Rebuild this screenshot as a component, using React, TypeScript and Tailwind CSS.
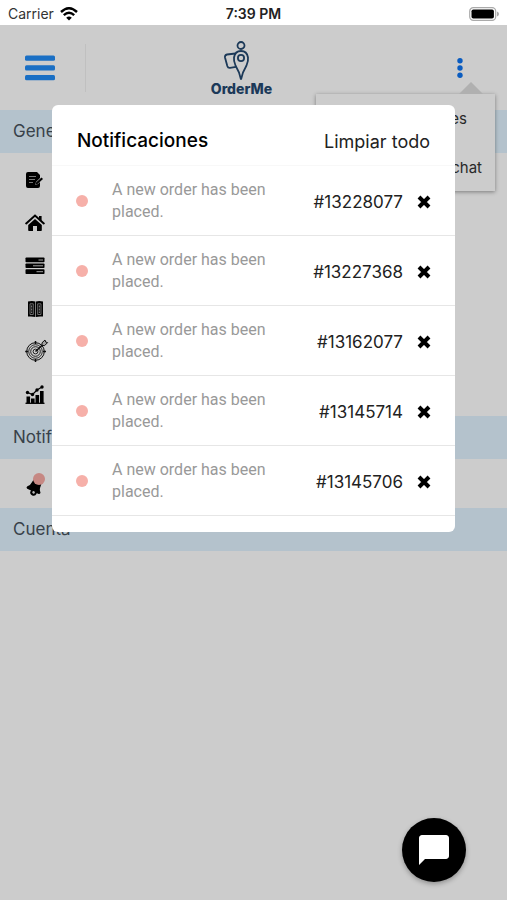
import type { ReactNode } from 'react'
import { MdChatBubble } from 'react-icons/md'

const notifications = [
  { id: '13228077', text: 'A new order has been placed.' },
  { id: '13227368', text: 'A new order has been placed.' },
  { id: '13162077', text: 'A new order has been placed.' },
  { id: '13145714', text: 'A new order has been placed.' },
  { id: '13145706', text: 'A new order has been placed.' },
]

function OrdersIcon() {
  return (
    <svg viewBox="0 0 20 20" className="w-5 h-5">
      <path d="M3 2h9l3 3v3l-4 4-1 3 3-1 2-2v4q0 2-2 2H3q-2 0-2-2V4q0-2 2-2z" />
      <path d="M4 6.5h7M4 9.5h6M4 12.5h4" stroke="#bbb" strokeWidth="0.8" fill="none" />
      <path d="M11 12.5l5.5-5 1.5 1.5-5.5 5-2.3.7z" />
    </svg>
  )
}

function HomeIcon() {
  return (
    <svg viewBox="0 0 20 20" className="w-5 h-5">
      <path d="M1.2 10.4L10 2.6l8.8 7.8" stroke="#000" strokeWidth="2" fill="none" strokeLinecap="round" />
      <path d="M14 3h2.6v5L14 5.6zM10 6l6.8 6v5.2q0 .8-.8.8h-4v-5H8v5H4q-.8 0-.8-.8V12z" />
    </svg>
  )
}

function StackIcon() {
  return (
    <svg viewBox="0 0 20 20" className="w-5 h-5">
      <rect x="0.5" y="1.5" width="19" height="4.8" rx="0.8" />
      <rect x="0.5" y="7.5" width="19" height="4.6" rx="0.8" />
      <rect x="0.5" y="13.3" width="19" height="4.8" rx="0.8" />
      <path d="M13.5 4H18M8 9.800h10M11.5 15.700H18" stroke="#ccc" strokeWidth="1" />
    </svg>
  )
}

function MenuBookIcon() {
  return (
    <svg viewBox="0 0 20 20" className="w-5 h-5">
      <path d="M3 2.500q4-.8 7.400 0v15.500q-3.400-1-7.400-.4zM18 2.500q-4-.8-7 0v15.500q3-1 7-.4z" />
      <path d="M5 4.800h3.300v10.700H5zM12.700 4.800H16v10.700h-3.300z" stroke="#bbb" strokeWidth="0.7" fill="none" />
      <path d="M6.650 6.500v7.500M14.350 6.500v7.500" stroke="#bbb" strokeWidth="0.9" strokeDasharray="2 1" />
    </svg>
  )
}

function TargetIcon() {
  return (
    <svg viewBox="0 0 24 26" className="w-6 h-[26px] mb-1.5" fill="none" stroke="#111" strokeWidth="1">
      <circle cx="10.500" cy="15.500" r="8.800" />
      <circle cx="10.500" cy="15.500" r="6.800" strokeWidth="0.800" />
      <circle cx="10.500" cy="15.500" r="4.800" strokeWidth="0.900" />
      <circle cx="10.500" cy="15.500" r="2.400" strokeWidth="0.900" />
      <path d="M10.500 5v3M10.500 23v3M.2 15.500h3M18 15.500h3" strokeWidth="1.500" />
      <path d="M10.500 15.500L19 7.500" strokeWidth="1.700" />
      <path d="M17 9.500V6.800L20 4l.6 2 2 .6-3 3z" fill="#ccc" />
    </svg>
  )
}

function ChartIcon() {
  return (
    <svg viewBox="0 0 20 20" className="w-5 h-5">
      <path d="M1.500 11.500h3.600v6.500H1.500zM6 13.500h3.600v4.500H6zM10.500 10h3.600v8h-3.600zM15 6h3.600v12H15z" />
      <path d="M0.500 18.300h19" stroke="#000" strokeWidth="1.300" />
      <path d="M2.500 7.500L7.500 9.500 12 5 17 2" stroke="#000" strokeWidth="1.200" fill="none" />
      <circle cx="2.500" cy="7.500" r="1.700" />
      <circle cx="7.500" cy="9.500" r="1.700" />
      <circle cx="12" cy="5" r="1.700" />
      <circle cx="17" cy="2" r="1.700" />
    </svg>
  )
}

function BellIcon() {
  return (
    <svg viewBox="0 0 20 20" className="w-5 h-5">
      <g transform="rotate(25 10 10)">
        <path d="M10 0q4.500 1 4.800 7 0 3.500 2.400 5.500 1 1.800-.9 2.300H3.700q-1.900-.5-.9-2.300Q5.200 10.500 5.200 7 5.500 1 10 0z" />
        <circle cx="11" cy="15.500" r="2.300" fill="#e8e8e8" stroke="#000" strokeWidth="2" />
      </g>
    </svg>
  )
}

function Logo() {
  return (
    <div className="flex flex-col items-center text-[#23486f]">
      <svg viewBox="0 0 36 40" className="w-9 h-10" fill="none" stroke="currentColor" strokeWidth="1.800">
        <circle cx="18" cy="4.500" r="3.500" />
        <path d="M18 38.500Q16.500 31 12.500 24.500 10.500 20 11 16.500 12 10 18 10t7 6.500q.5 3.500-1.500 8Q19.500 31 18 38.500z" />
        <circle cx="18" cy="17" r="3.100" />
        <path d="M12.500 12.500L4 13.500q-2.500.5-2 3l2.300 8.500q.7 2.200 2.700 1.900l6-1" />
      </svg>
      <span className="text-sm leading-4 font-extrabold">OrderMe</span>
    </div>
  )
}

function SectionTitle({ children }: { children: ReactNode }) {
  return <h2 className="h-[43px] px-[13px] flex items-center bg-[#e1f3ff] text-[17px] text-[#47525c]">{children}</h2>
}

const menu = [
  { label: 'Pedidos', icon: <OrdersIcon /> },
  { label: 'Inicio', icon: <HomeIcon /> },
  { label: 'Inventario', icon: <StackIcon /> },
  { label: 'Carta', icon: <MenuBookIcon /> },
  { label: 'Objetivos', icon: <TargetIcon /> },
  { label: 'Informes', icon: <ChartIcon /> },
]

export default function App() {
  return (
    <div className="min-h-screen flex flex-col bg-white font-[Inter,sans-serif] text-black">
      <div className="h-[25px] px-2 pt-0.5 grid grid-cols-3 items-center text-sm">
        <div className="flex items-center gap-1.5">
          <span className="text-[#333]">Carrier</span>
          <svg viewBox="0 0 18 14" className="w-[18px] h-3.5" fill="none" stroke="#000" strokeWidth="2.400">
            <path d="M1 5Q9-2.500 17 5M3.800 8.200q5.200-4.800 10.400 0" />
            <path d="M9 13.500L6.200 10.700q2.800-2.400 5.600 0z" fill="#000" stroke="none" />
          </svg>
        </div>
        <div className="text-center font-semibold text-[#222]">7:39 PM</div>
        <svg viewBox="0 0 30 14" className="w-[30px] h-3.5 justify-self-end">
          <rect x="0.700" y="0.700" width="26" height="12.600" rx="3.600" fill="#fff" stroke="#aaa" strokeWidth="1.200" />
          <rect x="2.500" y="2.500" width="22.400" height="9" rx="1.800" />
          <path d="M28 4.500q2 .8 2 2.500t-2 2.500z" fill="#aaa" />
        </svg>
      </div>

      <div className="relative flex-1">
        <header className="h-[85px] px-6 grid grid-cols-3 items-center">
          <div className="flex items-center gap-[29px]">
            <button aria-label="Menu" className="flex">
              <svg viewBox="0 0 32 26" className="w-8 h-[26px]" fill="#218bf5">
                <rect x="1" y="0.500" width="30" height="5.300" rx="1.500" />
                <rect x="1" y="10.200" width="30" height="5.300" rx="1.500" />
                <rect x="1" y="20" width="30" height="5.300" rx="1.500" />
              </svg>
            </button>
            <div className="w-px h-12 bg-[#f0f0f0]" />
          </div>
          <div className="flex justify-center pt-0.5 pr-6"><Logo /></div>
          <button aria-label="Más opciones" className="justify-self-end mr-5">
            <svg viewBox="0 0 6 20" className="w-1.5 h-5" fill="#0d73f0">
              <circle cx="3" cy="2.700" r="2.700" />
              <circle cx="3" cy="10" r="2.700" />
              <circle cx="3" cy="17.300" r="2.700" />
            </svg>
          </button>
        </header>

        <nav>
          <SectionTitle>General</SectionTitle>
          <ul className="pt-[5px]">
            {menu.map(m => (
              <li key={m.label}>
                <a href="#" aria-label={m.label} className="h-[43px] px-[25px] flex items-center">{m.icon}</a>
              </li>
            ))}
          </ul>
          <SectionTitle>Notificaciones</SectionTitle>
          <a href="#" aria-label="Notificaciones" className="h-[49px] px-[25px] pt-1.5 flex items-center">
            <span className="relative">
              <BellIcon />
              <span className="absolute -top-1 left-2 w-3 h-3 rounded-full bg-[#f8aaa4]" />
            </span>
          </a>
          <SectionTitle>Cuenta</SectionTitle>
        </nav>

        <div className="absolute top-[69px] right-3 w-[179px] h-[97px] bg-white shadow-[0_1px_4px_rgba(0,0,0,0.4)] text-[15px] text-[#333]">
          <svg viewBox="0 0 24 12" className="absolute -top-3 right-3 w-6 h-3" fill="#dcdcdc">
            <path d="M0 12L12 0l12 12z" />
          </svg>
          <button className="w-full h-[51px] pr-7 text-right">Notificaciones</button>
          <button className="w-full h-[46px] pr-[13px] text-right">Soporte chat</button>
        </div>

        <div className="absolute inset-0 bg-black/20" />

        <div role="dialog" aria-label="Notificaciones" className="absolute top-20 inset-x-[52px] pb-4 rounded-md bg-white">
          <div className="h-[61px] pt-3 px-[25px] flex items-center justify-between border-b border-[#f8f8f8]">
            <h1 className="text-[19px] font-medium">Notificaciones</h1>
            <button className="text-[18px] text-[#222]">Limpiar todo</button>
          </div>
          <ul>
            {notifications.map(n => (
              <li key={n.id} className="h-[70px] px-6 flex items-center border-b border-[#e6e6e6]">
                <span className="w-3 h-3 rounded-full bg-[#f6b0a9]" />
                <p className="ml-6 w-40 font-[Roboto,sans-serif] text-base leading-[22px] text-[#999]">{n.text}</p>
                <span className="ml-auto pt-1 text-[17px] text-[#222]">#{n.id}</span>
                <button aria-label="Eliminar" className="ml-3.5 pt-0.5">
                  <svg viewBox="0 0 14 14" className="w-3.5 h-3.5" stroke="#000" strokeWidth="4">
                    <path d="M2 2l10 10M12 2L2 12" />
                  </svg>
                </button>
              </li>
            ))}
          </ul>
        </div>

        <button aria-label="Chat" className="absolute right-[41px] bottom-[18px] w-16 h-16 rounded-full bg-black text-white flex items-center justify-center shadow-[0_2px_5px_rgba(0,0,0,0.3)]">
          <MdChatBubble className="w-9 h-9" />
        </button>
      </div>
    </div>
  )
}
